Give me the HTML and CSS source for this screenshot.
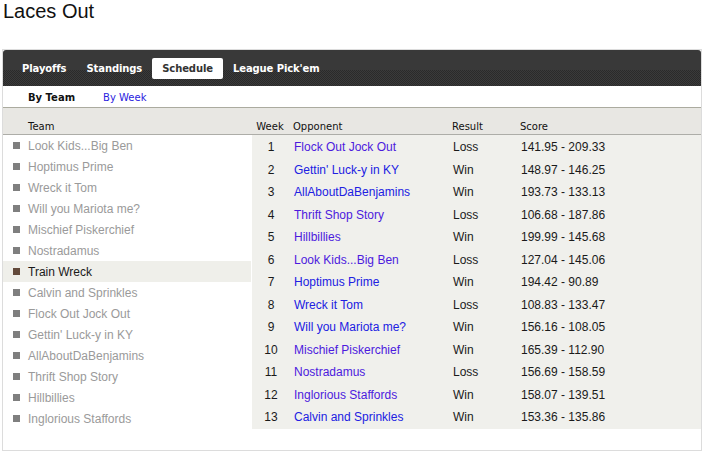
FILE: index.html
```html
<!DOCTYPE html>
<html>
<head>
<meta charset="utf-8">
<title>Laces Out</title>
<link rel="stylesheet" href="styles.css">
</head>
<body>
<h1 class="title">Laces Out</h1>
<div class="panel">
  <nav class="tabs">
    <a class="tab">Playoffs</a>
    <a class="tab">Standings</a>
    <a class="tab active">Schedule</a>
    <a class="tab">League Pick'em</a>
  </nav>
  <div class="subnav">
    <span class="sub active">By Team</span>
    <a class="sub link">By Week</a>
  </div>
  <div class="head">
    <div class="head-team">Team</div>
    <div class="grid head-grid">
      <span class="wk">Week</span><span class="cell">Opponent</span><span class="cell">Result</span><span class="cell">Score</span>
    </div>
  </div>
  <div class="body">
    <ul class="teams">
      <li class="team"><i class="sq"></i>Look Kids...Big Ben</li>
      <li class="team"><i class="sq"></i>Hoptimus Prime</li>
      <li class="team"><i class="sq"></i>Wreck it Tom</li>
      <li class="team"><i class="sq"></i>Will you Mariota me?</li>
      <li class="team"><i class="sq"></i>Mischief Piskerchief</li>
      <li class="team"><i class="sq"></i>Nostradamus</li>
      <li class="team sel"><i class="sq"></i>Train Wreck</li>
      <li class="team"><i class="sq"></i>Calvin and Sprinkles</li>
      <li class="team"><i class="sq"></i>Flock Out Jock Out</li>
      <li class="team"><i class="sq"></i>Gettin' Luck-y in KY</li>
      <li class="team"><i class="sq"></i>AllAboutDaBenjamins</li>
      <li class="team"><i class="sq"></i>Thrift Shop Story</li>
      <li class="team"><i class="sq"></i>Hillbillies</li>
      <li class="team"><i class="sq"></i>Inglorious Staffords</li>
    </ul>
    <div class="sched">
      <div class="grid row"><span class="wk">1</span><a class="cell v">Flock Out Jock Out</a><span class="cell">Loss</span><span class="cell">141.95 - 209.33</span></div>
      <div class="grid row"><span class="wk">2</span><a class="cell u">Gettin' Luck-y in KY</a><span class="cell">Win</span><span class="cell">148.97 - 146.25</span></div>
      <div class="grid row"><span class="wk">3</span><a class="cell u">AllAboutDaBenjamins</a><span class="cell">Win</span><span class="cell">193.73 - 133.13</span></div>
      <div class="grid row"><span class="wk">4</span><a class="cell v">Thrift Shop Story</a><span class="cell">Loss</span><span class="cell">106.68 - 187.86</span></div>
      <div class="grid row"><span class="wk">5</span><a class="cell v">Hillbillies</a><span class="cell">Win</span><span class="cell">199.99 - 145.68</span></div>
      <div class="grid row"><span class="wk">6</span><a class="cell v">Look Kids...Big Ben</a><span class="cell">Loss</span><span class="cell">127.04 - 145.06</span></div>
      <div class="grid row"><span class="wk">7</span><a class="cell u">Hoptimus Prime</a><span class="cell">Win</span><span class="cell">194.42 - 90.89</span></div>
      <div class="grid row"><span class="wk">8</span><a class="cell u">Wreck it Tom</a><span class="cell">Loss</span><span class="cell">108.83 - 133.47</span></div>
      <div class="grid row"><span class="wk">9</span><a class="cell u">Will you Mariota me?</a><span class="cell">Win</span><span class="cell">156.16 - 108.05</span></div>
      <div class="grid row"><span class="wk">10</span><a class="cell v">Mischief Piskerchief</a><span class="cell">Win</span><span class="cell">165.39 - 112.90</span></div>
      <div class="grid row"><span class="wk">11</span><a class="cell v">Nostradamus</a><span class="cell">Loss</span><span class="cell">156.69 - 158.59</span></div>
      <div class="grid row"><span class="wk">12</span><a class="cell v">Inglorious Staffords</a><span class="cell">Win</span><span class="cell">158.07 - 139.51</span></div>
      <div class="grid row"><span class="wk">13</span><a class="cell u">Calvin and Sprinkles</a><span class="cell">Win</span><span class="cell">153.36 - 135.86</span></div>
    </div>
  </div>
</div>
</body>
</html>
```
FILE: styles.css
```css
html, body {
  margin: 0;
  padding: 0;
  background: #fff;
}
body {
  font-family: "Liberation Sans", Arial, sans-serif;
  color: #222;
}
.title {
  margin: 0 0 26px 3px;
  font-size: 20px;
  line-height: 23px;
  font-weight: normal;
  color: #111;
}
.panel {
  margin-left: 2px;
  width: 700px;
  box-sizing: border-box;
  border: 1px solid #dcdcdc;
  padding-bottom: 21px;
}
.tabs {
  display: flex;
  height: 36px;
  box-sizing: border-box;
  padding: 8px 9px 7px;
  border-radius: 3px 3px 0 0;
  background:
    linear-gradient(#393939 0, #393939 20px, transparent 20px),
    repeating-conic-gradient(#2a2a2a 0 25%, #3a3a3a 0 50%) 0 0 / 2px 2px;
}
.tab {
  display: block;
  height: 21px;
  line-height: 22px;
  padding: 0 10px;
  font-family: "DejaVu Sans", Verdana, sans-serif;
  font-weight: bold;
  font-size: 10px;
  letter-spacing: -0.1px;
  color: #fff;
  border-radius: 2px;
}
.tab.active {
  background: #fff;
  color: #333;
}
.subnav {
  display: flex;
  height: 22px;
  align-items: center;
  padding: 1px 0 0 25px;
  box-sizing: border-box;
  gap: 28px;
  border-bottom: 1px solid #abab9f;
  font-family: "DejaVu Sans", Verdana, sans-serif;
  font-size: 10px;
}
.sub.active {
  font-weight: bold;
  color: #111;
}
.sub.link {
  color: #2a22e0;
}
.head {
  display: flex;
  height: 27px;
  box-sizing: border-box;
  background: #e8e7e3;
  border-bottom: 1px solid #adada8;
  font-family: "DejaVu Sans", Verdana, sans-serif;
  font-size: 10px;
  line-height: 12px;
  padding-top: 13px;
  color: #111;
}
.head-team {
  width: 248px;
  box-sizing: border-box;
  padding-left: 25px;
}
.grid {
  display: grid;
  grid-template-columns: 38px 159px 68px 1fr;
}
.head-grid {
  flex: 1;
}
.cell {
  padding-left: 4px;
}
.wk {
  text-align: center;
}
.body {
  display: flex;
}
.teams {
  list-style: none;
  margin: 0;
  padding: 0;
  width: 248px;
}
.team {
  display: flex;
  align-items: center;
  height: 21px;
  padding-left: 10px;
  font-size: 12px;
  color: #9a9a9a;
}
.sq {
  width: 7px;
  height: 7px;
  background: #7f7f7f;
  margin-right: 8px;
}
.team.sel {
  background: #efefea;
  color: #1a1a1a;
}
.team.sel .sq {
  background: #634a3b;
}
.sched {
  flex: 1;
  background: #f0f0ec;
  border-left: 1px solid #fff;
  padding-top: 1px;
}
.row {
  height: 22.5px;
  align-items: center;
  font-size: 12px;
  color: #1a1a1a;
}
.u {
  color: #2020e2;
}
.v {
  color: #4c1ade;
}
```
